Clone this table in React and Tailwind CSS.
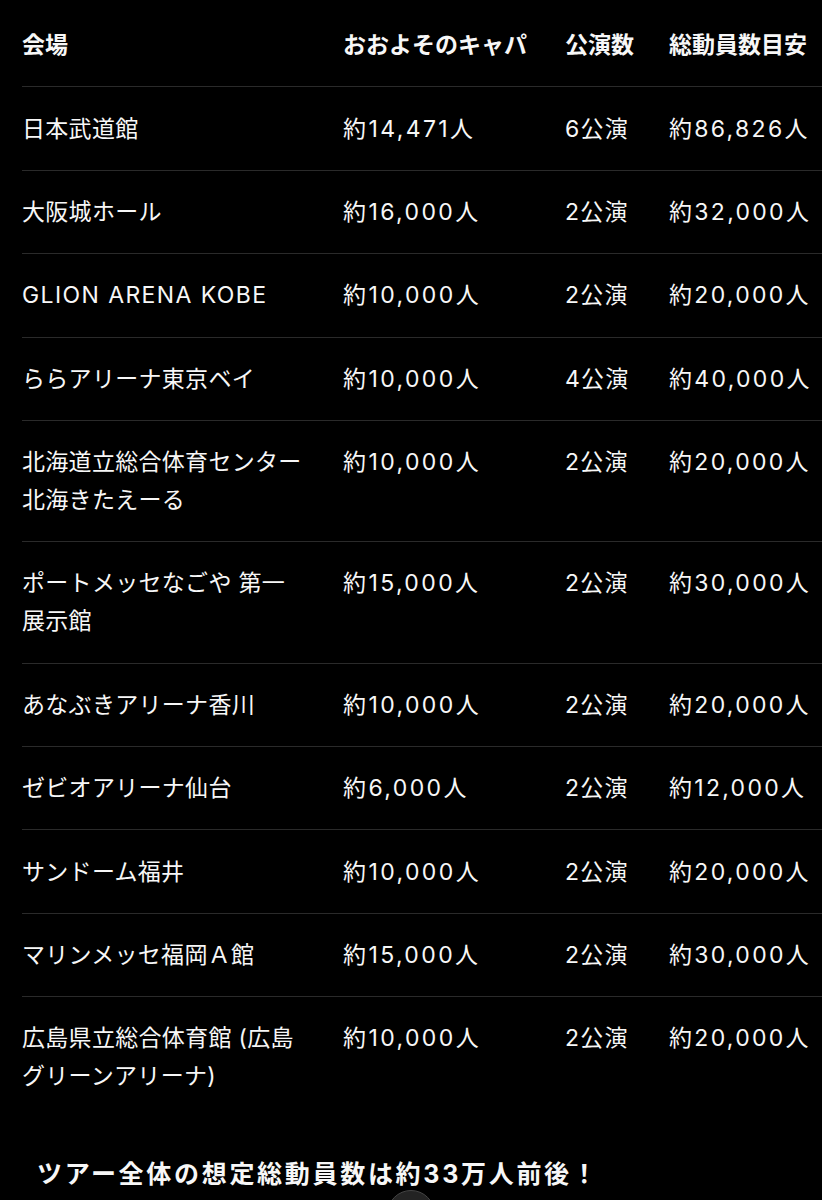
import React from "react";

const rows = [
  { name: ["日本武道館"], cap: "約14,471人", n: "6公演", total: "約86,826人" },
  { name: ["大阪城ホール"], cap: "約16,000人", n: "2公演", total: "約32,000人" },
  { name: ["GLION ARENA KOBE"], latin: true, cap: "約10,000人", n: "2公演", total: "約20,000人" },
  { name: ["ららアリーナ東京ベイ"], cap: "約10,000人", n: "4公演", total: "約40,000人" },
  { name: ["北海道立総合体育センター", "北海きたえーる"], cap: "約10,000人", n: "2公演", total: "約20,000人" },
  { name: ["ポートメッセなごや 第一", "展示館"], cap: "約15,000人", n: "2公演", total: "約30,000人" },
  { name: ["あなぶきアリーナ香川"], cap: "約10,000人", n: "2公演", total: "約20,000人" },
  { name: ["ゼビオアリーナ仙台"], cap: "約6,000人", n: "2公演", total: "約12,000人" },
  { name: ["サンドーム福井"], cap: "約10,000人", n: "2公演", total: "約20,000人" },
  { name: ["マリンメッセ福岡Ａ館"], cap: "約15,000人", n: "2公演", total: "約30,000人" },
  { name: ["広島県立総合体育館 (広島", "グリーンアリーナ)"], cap: "約10,000人", n: "2公演", total: "約20,000人" },
];

export default function App() {
  return (
    <div
      className="relative min-h-[1200px] w-full overflow-hidden bg-black text-[#f7f7f7]"
      style={{ fontFamily: 'Inter, "Noto Sans CJK JP", "Noto Sans", sans-serif' }}
    >
      <div className="pt-[4px] ml-[22px]">
        <div className="grid grid-cols-[321px_222px_104px_1fr] border-b border-[#2a2a2a] py-[22.2px] text-[23px] leading-[38px] font-bold">
          <div className="whitespace-nowrap">会場</div>
          <div className="whitespace-nowrap">おおよそのキャパ</div>
          <div className="whitespace-nowrap">公演数</div>
          <div className="whitespace-nowrap">総動員数目安</div>
        </div>
        {rows.map((r, i) => (
          <div
            key={i}
            className={
              i === rows.length - 1
                ? "grid grid-cols-[321px_222px_104px_1fr] py-[22.2px] text-[23px] leading-[38px] font-normal"
                : "grid grid-cols-[321px_222px_104px_1fr] border-b border-[#2a2a2a] py-[22.2px] text-[23px] leading-[38px] font-normal"
            }
          >
            <div className={r.latin ? "whitespace-nowrap tracking-[1.4px]" : "whitespace-nowrap tracking-[0.3px]"}>
              {r.name.map((l, j) => (
                <div key={j}>{l}</div>
              ))}
            </div>
            <div className="whitespace-nowrap tracking-[2.4px]">{r.cap}</div>
            <div className="whitespace-nowrap tracking-[1.2px]">{r.n}</div>
            <div className="whitespace-nowrap tracking-[2.3px]">{r.total}</div>
          </div>
        ))}
      </div>
      <div className="mt-[37px] pl-[37px] text-[25px] leading-[38px] font-bold tracking-[2.7px] whitespace-nowrap">
        ツアー全体の想定総動員数は約33万人前後！
      </div>
      <div className="absolute left-[387px] top-[1190px] h-12 w-12 rounded-full border border-[#444] bg-[#232323]"></div>
    </div>
  );
}
